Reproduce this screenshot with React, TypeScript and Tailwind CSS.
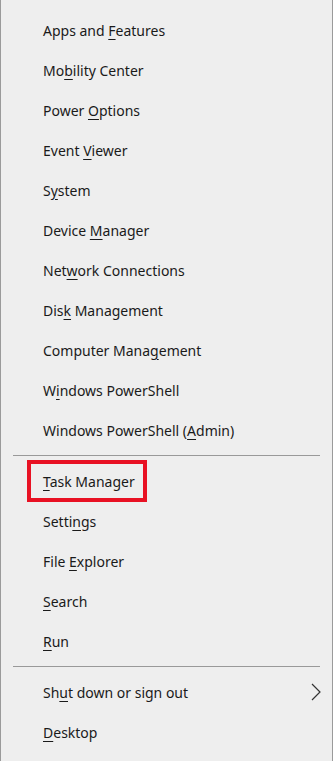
type Item = { pre: string; key: string; post: string; boxed?: boolean; arrow?: boolean };

const groups: Item[][] = [
  [
    { pre: "Apps and ", key: "F", post: "eatures" },
    { pre: "Mo", key: "b", post: "ility Center" },
    { pre: "Power ", key: "O", post: "ptions" },
    { pre: "Event ", key: "V", post: "iewer" },
    { pre: "S", key: "y", post: "stem" },
    { pre: "Device ", key: "M", post: "anager" },
    { pre: "Net", key: "w", post: "ork Connections" },
    { pre: "Dis", key: "k", post: " Management" },
    { pre: "Computer Mana", key: "g", post: "ement" },
    { pre: "W", key: "i", post: "ndows PowerShell" },
    { pre: "Windows PowerShell (", key: "A", post: "dmin)" },
  ],
  [
    { pre: "", key: "T", post: "ask Manager", boxed: true },
    { pre: "Setti", key: "n", post: "gs" },
    { pre: "File ", key: "E", post: "xplorer" },
    { pre: "", key: "S", post: "earch" },
    { pre: "", key: "R", post: "un" },
  ],
  [
    { pre: "Sh", key: "u", post: "t down or sign out", arrow: true },
    { pre: "", key: "D", post: "esktop" },
  ],
];

function Row({ item }: { item: Item }) {
  return (
    <div className="relative h-10 flex items-center pl-[42px] pr-[12px]">
      <span className="flex-1 text-[14px] text-[#1a1a1a] whitespace-nowrap">
        {item.pre}
        <u className="underline-offset-[3px]">{item.key}</u>
        {item.post}
      </span>
      {item.arrow && (
        <svg width="10" height="18" viewBox="0 0 10 18" className="mr-[-1px]">
          <path d="M1 1 L9 9 L1 17" fill="none" stroke="#333" strokeWidth="1.2" />
        </svg>
      )}
      {item.boxed && (
        <div className="absolute left-[26px] top-[-1px] w-[120px] h-[42px] border-4 border-[#e81123]" />
      )}
    </div>
  );
}

export default function App() {
  return (
    <div className="w-[333px] h-[761px] bg-[#eeeeee] border-x border-[#9a9a9a] pt-[10px] font-['Noto_Sans',sans-serif]">
      {groups.map((group, gi) => (
        <div key={gi}>
          {gi > 0 && <div className="h-px bg-[#999999] mx-[12px] my-[5px]" />}
          {group.map((item, i) => (
            <Row key={i} item={item} />
          ))}
        </div>
      ))}
    </div>
  );
}
